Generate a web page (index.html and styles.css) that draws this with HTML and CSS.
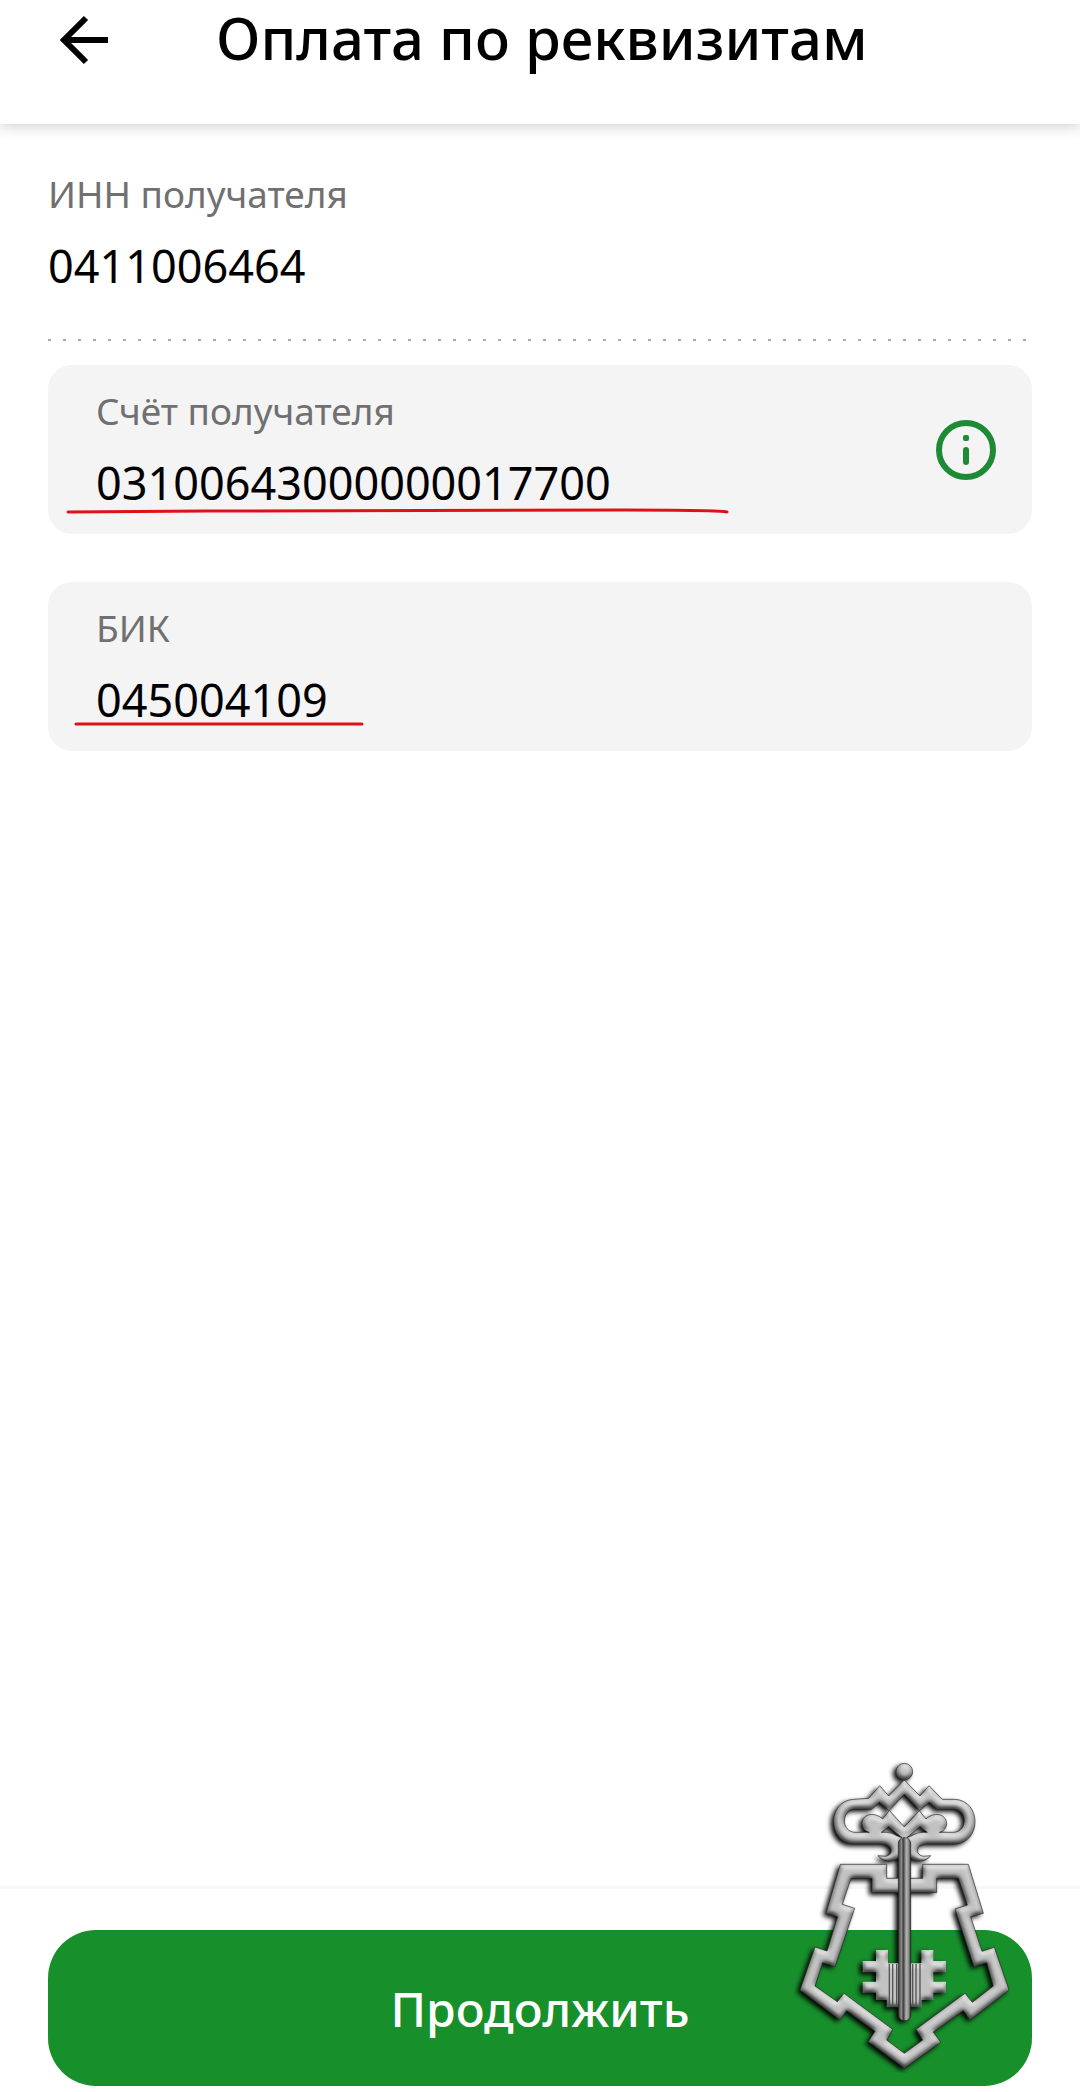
FILE: index.html
```html
<!DOCTYPE html>
<html lang="ru">
<head>
  <meta charset="UTF-8">
  <meta name="viewport" content="width=device-width, initial-scale=1.0">
  <title>Оплата по реквизитам</title>
  <link rel="stylesheet" href="styles.css">
</head>
<body>

  <header class="header">
    <button class="back-button" type="button" aria-label="Назад">
      <svg width="72" height="76" viewBox="0 0 72 76" fill="none" stroke="#000" stroke-width="6">
        <path d="M60 40H16M38 18L16 40L38 62"/>
      </svg>
    </button>
    <h1 class="title">Оплата по реквизитам</h1>
  </header>

  <form class="page">
    <main class="content">
      <!-- ИНН -->
      <div class="static-field">
        <div class="label">ИНН получателя</div>
        <div class="value">0411006464</div>
      </div>

      <!-- Счёт -->
      <div class="field">
        <div class="field-text">
          <label class="label" for="account">Счёт получателя</label>
          <input class="value" id="account" type="text" inputmode="numeric" value="03100643000000017700">
        </div>
        <button class="info-button" type="button" aria-label="Подсказка">
          <svg width="60" height="60" viewBox="0 0 60 60">
            <circle cx="30" cy="30" r="27" fill="none" stroke="#1f8a35" stroke-width="6"/>
            <rect x="27" y="15" width="6" height="6" rx="2" fill="#1f8a35"/>
            <rect x="27" y="27" width="6" height="18" rx="3" fill="#1f8a35"/>
          </svg>
        </button>
        <svg class="mark mark-account" width="668" height="12" viewBox="0 0 668 12">
          <path d="M4 8C200 6 420 7 560 6C620 6 655 6 663 8"/>
        </svg>
      </div>

      <!-- БИК -->
      <div class="field">
        <div class="field-text">
          <label class="label" for="bik">БИК</label>
          <input class="value" id="bik" type="text" inputmode="numeric" value="045004109">
        </div>
        <svg class="mark mark-bik" width="294" height="12" viewBox="0 0 294 12">
          <path d="M4 6H290"/>
        </svg>
      </div>
    </main>

    <footer class="footer">
      <button class="submit-button" type="submit">Продолжить</button>

      <!-- Эмблема с ключом -->
      <svg class="emblem" width="223" height="313" viewBox="39 60 669 939" aria-hidden="true">
        <defs>
          <filter id="metal" x="-10%" y="-10%" width="120%" height="120%" color-interpolation-filters="sRGB">
            <feGaussianBlur in="SourceAlpha" stdDeviation="8" result="b"/>
            <feDiffuseLighting in="b" surfaceScale="10" diffuseConstant="1" lighting-color="#dcdcdc" result="l">
              <feDistantLight azimuth="285" elevation="62"/>
            </feDiffuseLighting>
            <feComposite in="l" in2="SourceAlpha" operator="in"/>
          </filter>
          <filter id="shadow" x="-10%" y="-10%" width="120%" height="120%">
            <feGaussianBlur stdDeviation="8"/>
          </filter>
          <linearGradient id="shaft">
            <stop offset="0" stop-color="#3a3a3a"/>
            <stop offset="0.25" stop-color="#8c8c8c"/>
            <stop offset="0.4" stop-color="#3c3c3c"/>
            <stop offset="0.65" stop-color="#b4b4b4"/>
            <stop offset="0.85" stop-color="#8a8a8a"/>
            <stop offset="1" stop-color="#303030"/>
          </linearGradient>
          <path id="wall" fill-rule="evenodd" d="M181 373H320V415H428V373H565L610 520L572 530L606 634L643 622L687 750L570 840L550 812L460 876L482 907L373 985L265 905L285 874L200 812L180 840L60 750L105 621L141 633L173 530L138 520Z
            M213 415L187 493L224 505L165 680L128 668L105 738L172 785L192 760L338 868L320 900L373 940L428 900L408 868L555 760L577 787L640 738L620 668L582 680L525 507L562 495L535 415H470V458H276V415Z"/>
          <path id="crown" fill-rule="evenodd" d="M373 120L420 168L447 137L487 178L525 178C605 182 605 308 525 312L440 312C405 314 405 345 430 349L452 347C438 368 405 366 393 355L353 355C341 366 308 368 294 347L316 349C341 345 341 314 306 312L221 312C141 308 141 182 221 178L266 175L299 137L326 168Z
            M373 163L419 211L373 261L328 211Z
            M298 187L328 212L308 237C285 215 248 220 246 250C246 264 256 274 268 277L225 277C183 275 183 212 222 208L275 208Z
            M448 187L418 212L438 237C461 215 498 220 500 250C500 264 490 274 478 277L521 277C563 275 563 212 524 208L471 208Z
            M304 277L326 260L366 293C350 290 340 278 320 277Z
            M442 277L420 260L380 293C396 290 406 278 426 277Z"/>
          <path id="bit" d="M288 630H324V670H424V630H460V663H498V697H460V725H498V758H460V780H425V802H320V780H288V758H248V725H288V697H248V663H288Z"/>
          <rect id="stem" x="355" y="293" width="37" height="549" rx="17"/>
          <circle id="ball" cx="373" cy="95" r="25"/>
          <g id="shape">
            <use href="#wall"/>
            <use href="#crown"/>
            <use href="#bit"/>
            <use href="#stem"/>
            <use href="#ball"/>
          </g>
        </defs>
        <use href="#shape" x="-9" y="7" filter="url(#shadow)"/>
        <g filter="url(#metal)"><use href="#wall"/></g>
        <g filter="url(#metal)"><use href="#crown"/></g>
        <g filter="url(#metal)"><use href="#bit"/></g>
        <g filter="url(#metal)"><use href="#ball"/></g>
        <g fill="none" stroke="#222" stroke-width="2">
          <use href="#wall"/>
          <use href="#crown"/>
          <use href="#ball"/>
        </g>
        <path d="M328 672V800M338 672V800M350 672V800M398 672V800M408 672V800M420 672V800" stroke="#555" stroke-width="4"/>
        <use href="#stem" fill="url(#shaft)" stroke="#222" stroke-width="2"/>
      </svg>
    </footer>
  </form>

</body>
</html>
```

FILE: styles.css
```css
* {
  box-sizing: border-box;
}

body {
  margin: 0;
  min-height: 100vh;
  display: flex;
  flex-direction: column;
  background: #fff;
  color: #000;
  font-family: "Noto Sans", "Open Sans", sans-serif;
}

button {
  padding: 0;
  border: none;
  background: none;
  font-family: inherit;
  cursor: pointer;
}

svg {
  display: block;
}

.header {
  display: flex;
  gap: 96px;
  padding: 0 48px 48px;
  box-shadow: 0 2px 14px rgba(0, 0, 0, 0.2);
}

.title {
  margin: 0;
  font-size: 58px;
  line-height: 76px;
  font-weight: 500;
}

.page {
  flex: 1;
  display: flex;
  flex-direction: column;
}

.content {
  flex: 1;
  padding: 46px 48px 48px;
}

.label {
  display: block;
  margin-bottom: 18px;
  font-size: 37px;
  line-height: 48px;
  color: #707070;
}

.value {
  display: block;
  width: 100%;
  height: 60px;
  padding: 0;
  border: none;
  outline: none;
  background: none;
  color: #000;
  font-family: inherit;
  font-size: 45px;
  line-height: 60px;
}

/* пунктир под ИНН */
.static-field {
  padding-bottom: 45px;
  margin-bottom: 24px;
  background: repeating-linear-gradient(to right, #aaa 0 3px, transparent 3px 15px) bottom / 100% 2px no-repeat;
}

.field {
  position: relative;
  display: flex;
  align-items: center;
  padding: 22px 36px 21px 48px;
  margin-bottom: 48px;
  border-radius: 24px;
  background: #f4f4f4;
}

.field-text {
  flex: 1;
}

/* красные подчёркивания поверх полей */
.mark {
  position: absolute;
  fill: none;
  stroke: #de1216;
  stroke-width: 3;
  stroke-linecap: round;
  pointer-events: none;
}

.mark-account {
  left: 16px;
  top: 139px;
}

.mark-bik {
  left: 24px;
  top: 136px;
}

.footer {
  position: relative;
  padding: 41px 48px 6px;
  border-top: 3px solid #f7f7f7;
}

.submit-button {
  display: block;
  width: 100%;
  height: 156px;
  border-radius: 48px;
  background: #178f2b;
  color: #fff;
  font-size: 48px;
  font-weight: 500;
}

.emblem {
  position: absolute;
  right: 64px;
  bottom: 19px;
  pointer-events: none;
}
```
